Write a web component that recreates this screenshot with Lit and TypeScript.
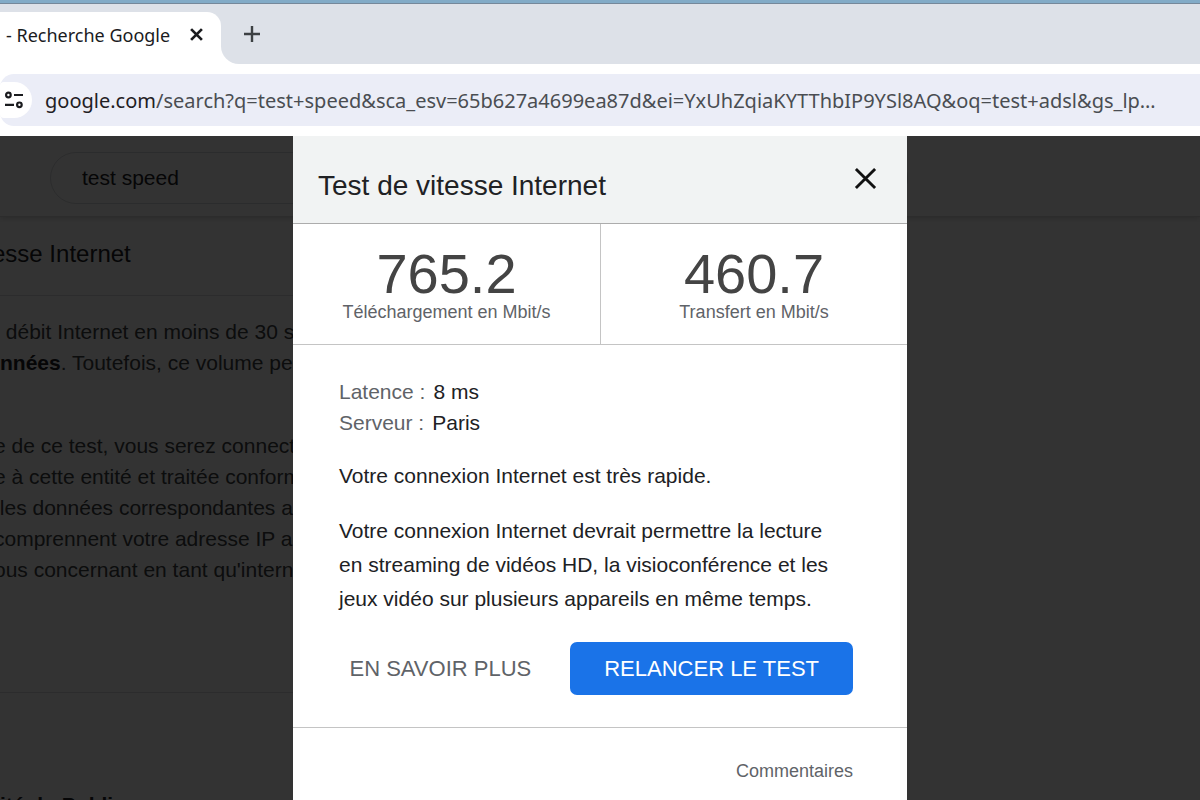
import { LitElement, html, css, svg } from "lit";
import { customElement, property } from "lit/decorators.js";

const cross = (width: number) => svg`
  <path d="M2 2 L22 22 M22 2 L2 22" fill="none" stroke="currentColor" stroke-width=${width} />
`;

@customElement("browser-bar")
class BrowserBar extends LitElement {
  static styles = css`
    :host {
      display: block;
      background: #fff;
      font-family: "Noto Sans", "Open Sans", sans-serif;
    }
    .edge {
      height: 3px;
      background: #82abc7;
      border-bottom: 1px solid #75889a;
    }
    .tabs {
      display: flex;
      height: 60px;
      background: #fff;
    }
    .tab-slot {
      flex: none;
      background: #dde1e8;
      padding-top: 8px;
    }
    .tab {
      display: flex;
      align-items: center;
      gap: 20px;
      height: 45px;
      padding: 0 18px 0 6px;
      background: #fff;
      border-top-right-radius: 14px;
      color: #1a1b1e;
      font-size: 18px;
      white-space: nowrap;
    }
    .tab-foot {
      height: 7px;
      background: #fff;
    }
    .strip {
      flex: 1;
      display: flex;
      align-items: center;
      padding: 0 0 0 23px;
      background: #dde1e8;
      border-bottom-left-radius: 18px;
    }
    .icon-button {
      display: flex;
      padding: 0;
      border: 0;
      background: none;
      color: #1a1b1e;
    }
    .plus {
      color: #3c4043;
    }
    .toolbar {
      padding: 10px 0;
    }
    .omnibox {
      display: flex;
      align-items: center;
      height: 52px;
      border-radius: 14px 0 0 14px;
      background: #ebedf7;
      color: #1f2024;
      font-size: 20px;
    }
    .site {
      flex: none;
      align-items: center;
      width: 32px;
      height: 36px;
      margin-right: 13px;
      padding-left: 3px;
      box-sizing: border-box;
      border-radius: 4px 18px 18px 4px;
      background: #fff;
    }
    .address {
      flex: 1;
      min-width: 0;
      padding: 0;
      border: 0;
      outline: 0;
      background: none;
      color: #4a4d52;
      font: inherit;
    }
  `;

  render() {
    return html`
      <div class="edge"></div>
      <div class="tabs">
        <div class="tab-slot">
          <div class="tab">
            <span>- Recherche Google</span>
            <button class="icon-button" aria-label="Fermer l'onglet">
              <svg width="13" height="13" viewBox="0 0 24 24">${cross(5)}</svg>
            </button>
          </div>
          <div class="tab-foot"></div>
        </div>
        <div class="strip">
          <button class="icon-button plus" aria-label="Nouvel onglet">
            <svg width="16" height="16" viewBox="0 0 16 16">
              <path d="M8 0V16M0 8H16" stroke="currentColor" stroke-width="2.4" />
            </svg>
          </button>
        </div>
      </div>
      <div class="toolbar">
        <div class="omnibox">
          <button class="icon-button site" aria-label="Informations sur le site">
            <svg width="22" height="20" viewBox="0 0 22 20" fill="none" stroke="currentColor" stroke-width="2.2">
              <circle cx="5.4" cy="5" r="2.3" />
              <path d="M11 5H20M2 14.8H11" />
              <circle cx="16.4" cy="14.8" r="2.3" />
            </svg>
          </button>
          <label for="address">google.com</label>
          <input
            id="address"
            class="address"
            .value=${"/search?q=test+speed&sca_esv=65b627a4699ea87d&ei=YxUhZqiaKYTThbIP9YSl8AQ&oq=test+adsl&gs_lp…"}
          />
        </div>
      </div>
    `;
  }
}

@customElement("results-page")
class ResultsPage extends LitElement {
  static styles = css`
    :host {
      display: block;
      overflow: hidden;
      background: #fff;
      color: #202124;
      font-size: 21px;
      line-height: 31px;
      white-space: nowrap;
    }
    .top {
      padding: 16px 292px 12px 50px;
      border-bottom: 1px solid #dcdcdc;
      box-shadow: 0 1px 6px #ccc;
    }
    .search {
      display: block;
      width: 100%;
      height: 52px;
      box-sizing: border-box;
      padding: 0 31px;
      border: 1px solid #d8dade;
      border-radius: 26px;
      outline: 0;
      background: none;
      color: inherit;
      font: inherit;
    }
    .card {
      max-width: 620px;
    }
    .title {
      margin: 0;
      padding: 21px 0 26px;
      border-bottom: 1px solid #dadce0;
      font-size: 24px;
      font-weight: 400;
      text-indent: -8px;
    }
    .copy {
      padding: 20px 0 107px;
      border-bottom: 1px solid #dadce0;
      color: #3c4043;
    }
    .copy p {
      margin: 0 0 52px;
    }
    .copy p:last-child {
      margin: 0 0 0 -6px;
    }
    .copy strong {
      color: #202124;
    }
    .next {
      margin: 0;
      padding: 96px 0 0;
      font-size: 21px;
    }
  `;

  render() {
    return html`
      <div class="top">
        <input class="search" aria-label="Rechercher" .value=${"test speed"} />
      </div>
      <div class="card">
        <h2 class="title">esse Internet</h2>
        <div class="copy">
          <p>
            &nbsp;débit Internet en moins de 30 secondes<br />
            <strong>nnées</strong>. Toutefois, ce volume peut
          </p>
          <p>
            e de ce test, vous serez connecté<br />
            e à cette entité et traitée conformément<br />
            &nbsp;les données correspondantes aux<br />
            comprennent votre adresse IP ainsi<br />
            ous concernant en tant qu'internaute
          </p>
        </div>
        <h3 class="next">ité du Publi</h3>
      </div>
    `;
  }
}

@customElement("speed-figure")
class SpeedFigure extends LitElement {
  @property() value = "";
  @property() label = "";

  static styles = css`
    :host {
      display: flex;
      flex-direction: column;
      align-items: center;
      padding: 21px 0;
    }
    .value {
      color: #444;
      font-size: 56px;
      line-height: 57px;
    }
    .label {
      color: #5f6368;
      font-size: 18px;
      line-height: 21px;
    }
  `;

  render() {
    return html`
      <span class="value">${this.value}</span>
      <span class="label">${this.label}</span>
    `;
  }
}

@customElement("speed-dialog")
class SpeedDialog extends LitElement {
  static styles = css`
    :host {
      display: flex;
      flex-direction: column;
      background: #fff;
      color: #202124;
      font-size: 21px;
      line-height: 34px;
    }
    .head {
      display: flex;
      justify-content: space-between;
      align-items: flex-start;
      padding: 31px 30px 20px 25px;
      border-bottom: 1px solid #acacac;
      background: #f1f3f3;
    }
    .title {
      margin: 0;
      padding-top: 2px;
      font-size: 28px;
      line-height: 34px;
      font-weight: 400;
    }
    .close {
      display: flex;
      padding: 0;
      border: 0;
      background: none;
      color: #111;
    }
    .figures {
      display: grid;
      grid-template-columns: 1fr 1fr;
      border-bottom: 1px solid #c4c4c4;
    }
    .figures speed-figure + speed-figure {
      border-left: 1px solid #c4c4c4;
    }
    .body {
      padding: 31px 54px 32px 46px;
      border-bottom: 1px solid #c4c4c4;
    }
    .facts {
      margin: 0;
      line-height: 31px;
    }
    .fact {
      display: flex;
      gap: 8px;
    }
    .fact dt {
      color: #5f6368;
    }
    .fact dd {
      margin: 0;
    }
    .body p {
      max-width: 508px;
      margin: 21px 0 0;
    }
    .actions {
      display: flex;
      justify-content: flex-end;
      gap: 24px;
      margin-top: 26px;
    }
    .action {
      height: 53px;
      padding: 0 15px;
      border: 0;
      border-radius: 7px;
      background: none;
      color: #5f6368;
      font: inherit;
      font-size: 22px;
      white-space: nowrap;
    }
    .primary {
      padding: 0 34px;
      background: #1a73e8;
      color: #fff;
    }
    .foot {
      display: flex;
      justify-content: flex-end;
      padding: 26px 54px;
    }
    .foot a {
      color: #5f6368;
      font-size: 18px;
      text-decoration: none;
    }
  `;

  render() {
    return html`
      <header class="head">
        <h1 class="title">Test de vitesse Internet</h1>
        <button class="close" aria-label="Fermer">
          <svg width="23" height="23" viewBox="0 0 24 24">${cross(3)}</svg>
        </button>
      </header>
      <div class="figures">
        <speed-figure value="765.2" label="Téléchargement en Mbit/s"></speed-figure>
        <speed-figure value="460.7" label="Transfert en Mbit/s"></speed-figure>
      </div>
      <div class="body">
        <dl class="facts">
          <div class="fact"><dt>Latence :</dt><dd>8 ms</dd></div>
          <div class="fact"><dt>Serveur :</dt><dd>Paris</dd></div>
        </dl>
        <p>Votre connexion Internet est très rapide.</p>
        <p>
          Votre connexion Internet devrait permettre la lecture en streaming de vidéos HD, la
          visioconférence et les jeux vidéo sur plusieurs appareils en même temps.
        </p>
        <div class="actions">
          <button class="action">EN SAVOIR PLUS</button>
          <button class="action primary">RELANCER LE TEST</button>
        </div>
      </div>
      <footer class="foot"><a href="#commentaires">Commentaires</a></footer>
    `;
  }
}

@customElement("app-root")
class AppRoot extends LitElement {
  static styles = css`
    :host {
      display: flex;
      flex-direction: column;
      height: 100vh;
      overflow: hidden;
      font-family: "Liberation Sans", Arial, sans-serif;
    }
    .stage {
      flex: 1;
      min-height: 0;
      display: grid;
      grid-template-columns: minmax(0, 1fr);
      grid-template-rows: minmax(0, 1fr);
      justify-items: center;
      overflow: hidden;
    }
    .stage > * {
      grid-area: 1 / 1;
    }
    .page,
    .scrim {
      justify-self: stretch;
    }
    .scrim {
      background: rgba(0, 0, 0, 0.8);
      z-index: 1;
    }
    .dialog {
      width: 100%;
      max-width: 614px;
      z-index: 2;
    }
  `;

  render() {
    return html`
      <browser-bar></browser-bar>
      <div class="stage">
        <results-page class="page"></results-page>
        <div class="scrim"></div>
        <speed-dialog class="dialog" role="dialog" aria-label="Test de vitesse Internet"></speed-dialog>
      </div>
    `;
  }
}
